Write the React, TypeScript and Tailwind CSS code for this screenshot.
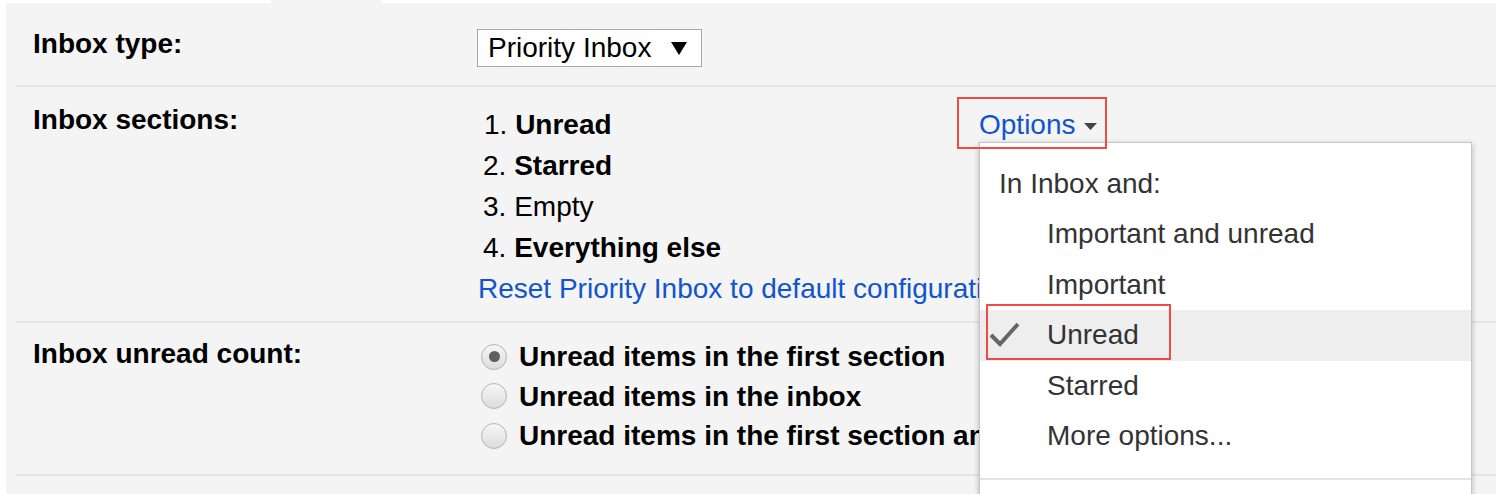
import { ReactNode } from "react";

// One settings row: bold label on the left, controls on the right
const Row = ({
  label,
  labelPad,
  height,
  children,
}: {
  label: string;
  labelPad: string;
  height: string;
  children: ReactNode;
}) => (
  <div className={`flex border-b-2 border-[#e5e5e5] ${height}`}>
    <div className={`w-[462px] shrink-0 pl-[18px] font-bold ${labelPad}`}>{label}</div>
    <div className="relative flex-1">{children}</div>
  </div>
);

const Radio = ({ checked }: { checked?: boolean }) => (
  <span className="flex h-[26px] w-[26px] shrink-0 items-center justify-center rounded-full border border-[#b4b4b4] bg-gradient-to-b from-[#f6f6f6] to-[#dcdcdc]">
    {checked && <span className="h-[11px] w-[11px] rounded-full bg-[#5f5f5f]" />}
  </span>
);

const menuItems = ["Important and unread", "Important", "Unread", "Starred", "More options..."];

export default function App() {
  return (
    <div className="h-[494px] w-[1496px] overflow-hidden bg-white font-['Liberation_Sans',Arial,sans-serif] text-[28px] text-black">
      {/* top tab strip */}
      <div className="flex h-[3px]">
        <div className="ml-[271px] w-[110px] bg-[#f4f4f4]" />
      </div>

      <div className="ml-[6px] h-[491px] bg-[#f4f4f4] pl-[9px]">
        {/* Inbox type */}
        <Row label="Inbox type:" labelPad="pt-[22px] leading-[38px]" height="h-[84px]">
          <div className="pt-[26px]">
            <div className="flex h-[38px] w-[225px] items-center border border-[#a9a9a9] bg-white pl-[10px] leading-[36px]">
              <span className="flex-1">Priority Inbox</span>
              <svg width="16" height="13" viewBox="0 0 16 13" className="mr-[14px]">
                <path d="M0 0 H16 L8 13 Z" fill="#000" />
              </svg>
            </div>
          </div>
        </Row>

        {/* Inbox sections */}
        <Row label="Inbox sections:" labelPad="pt-[12px] leading-[41px]" height="h-[236px]">
          <div className="flex">
            <div className="w-[480px] shrink-0 whitespace-nowrap pt-[17px] leading-[41px]">
              <div className="pl-[7px]">
                1. <span className="font-bold">Unread</span>
              </div>
              <div className="pl-[6px]">
                2. <span className="font-bold">Starred</span>
              </div>
              <div className="pl-[6px]">3. Empty</div>
              <div className="pl-[6px]">
                4. <span className="font-bold">Everything else</span>
              </div>
              <div className="w-[502px] overflow-hidden pl-[1px] text-[#1155cc]">
                Reset Priority Inbox to default configuration
              </div>
            </div>

            <div className="relative mt-[10px]">
              <div className="relative z-20 flex h-[52px] w-[150px] items-center border-2 border-[#f44848] pl-[20px] pt-[4px] leading-[44px] text-[#1155cc]">
                Options
                <svg width="13" height="7" viewBox="0 0 13 7" className="ml-[8px] mt-[2px]">
                  <path d="M0 0 H13 L6.5 7 Z" fill="#444" />
                </svg>
              </div>

              {/* dropdown menu */}
              <div className="absolute left-[22px] top-[45px] z-10 h-[370px] w-[493px] border border-[#c6c6c6] bg-white pt-[16px] text-[#333] shadow-[0_2px_6px_rgba(0,0,0,0.25)]">
                <div className="flex h-[50px] items-center pl-[19px]">In Inbox and:</div>
                {menuItems.map((item) => (
                  <div
                    key={item}
                    className={`relative flex h-[50.5px] items-center pl-[67px] ${item === "Unread" ? "bg-[#eeeeee]" : ""}`}
                  >
                    {item === "Unread" && (
                      <svg width="34" height="30" viewBox="0 0 34 30" className="absolute left-[8px] top-[10px] blur-[0.6px]">
                        <path d="M3 15 L12 24 L30 4" fill="none" stroke="#666" strokeWidth="4" />
                      </svg>
                    )}
                    {item}
                  </div>
                ))}
                <div className="mt-[16px] border-t-2 border-[#e3e3e3]" />
                <div className="absolute left-[6px] top-[161px] h-[56px] w-[185px] border-2 border-[#f44848]" />
              </div>
            </div>
          </div>
        </Row>

        {/* Inbox unread count */}
        <Row label="Inbox unread count:" labelPad="pt-[11px] leading-[40px]" height="h-[153px]">
          <div className="w-[502px] overflow-hidden whitespace-nowrap pt-[14px] font-bold leading-[39.5px]">
            <div className="flex items-center gap-[12px] pl-[4px]">
              <Radio checked />
              Unread items in the first section
            </div>
            <div className="flex items-center gap-[12px] pl-[4px]">
              <Radio />
              Unread items in the inbox
            </div>
            <div className="flex items-center gap-[12px] pl-[4px]">
              <Radio />
              Unread items in the first section and inbox
            </div>
          </div>
        </Row>
      </div>
    </div>
  );
}
